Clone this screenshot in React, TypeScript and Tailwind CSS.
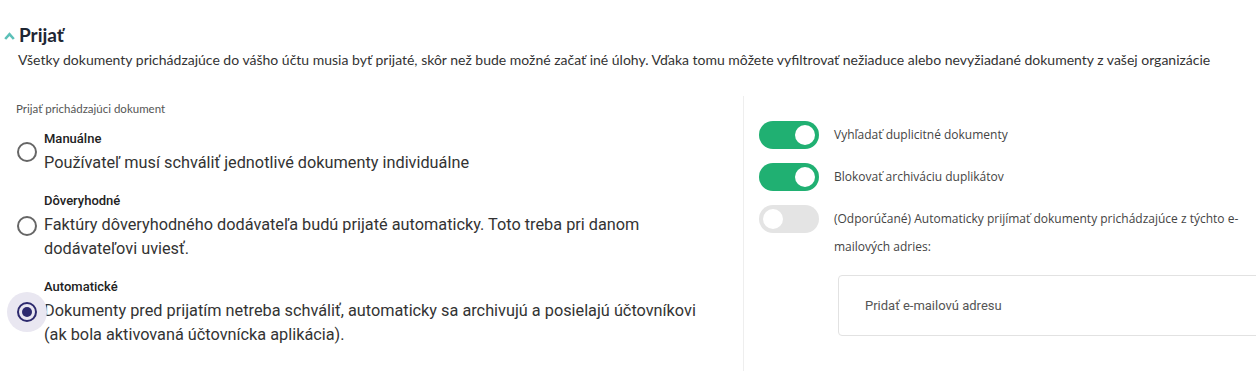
import { useState } from 'react';

const options = [
  {
    id: 'manual',
    title: 'Manuálne',
    text: 'Používateľ musí schváliť jednotlivé dokumenty individuálne',
  },
  {
    id: 'trusted',
    title: 'Dôveryhodné',
    text: 'Faktúry dôveryhodného dodávateľa budú prijaté automaticky. Toto treba pri danom dodávateľovi uviesť.',
  },
  {
    id: 'auto',
    title: 'Automatické',
    text: 'Dokumenty pred prijatím netreba schváliť, automaticky sa archivujú a posielajú účtovníkovi (ak bola aktivovaná účtovnícka aplikácia).',
  },
];

function Toggle({ on, onClick }: { on: boolean; onClick: () => void }) {
  return (
    <button
      type="button"
      onClick={onClick}
      className={`flex h-[28px] w-[60px] shrink-0 items-center rounded-full px-[4px] ${
        on ? 'justify-end bg-[#20b072]' : 'justify-start bg-[#e4e4e4]'
      }`}
    >
      <span className="block h-[20px] w-[20px] rounded-full bg-white" />
    </button>
  );
}

export default function App() {
  const [selected, setSelected] = useState('auto');
  const [dup, setDup] = useState(true);
  const [block, setBlock] = useState(true);
  const [autoMail, setAutoMail] = useState(false);

  return (
    <div className="flex h-[371px] w-[1256px] flex-col overflow-hidden bg-white">
      <div className="flex items-center gap-[4px] pl-[4px] pt-[23px]">
        <svg width="11" height="8" viewBox="0 0 11 8" className="mt-[1px]">
          <path d="M1.2 7 L5.5 2.2 L9.8 7" fill="none" stroke="#5cc0b8" strokeWidth="2.6" />
        </svg>
        <h2 className="font-['Lato',sans-serif] text-[19px] font-bold leading-[24px] text-[#1e2633]">Prijať</h2>
      </div>
      <p className="mt-[4px] pl-[18px] font-['Lato',sans-serif] text-[14px] leading-[18px] text-[#333]">
        Všetky dokumenty prichádzajúce do vášho účtu musia byť prijaté, skôr než bude možné začať iné úlohy. Vďaka tomu môžete vyfiltrovať nežiaduce alebo nevyžiadané dokumenty z vašej organizácie
      </p>

      <div className="mt-[27px] flex flex-1">
        <div className="w-[743px] shrink-0 pl-[16px] pt-[6px]">
          <div className="font-['Lato',sans-serif] text-[11.5px] leading-[14px] text-[#555]">Prijať prichádzajúci dokument</div>
          <div className="mt-[13px] flex flex-col gap-[16px]">
            {options.map((o) => {
              const on = selected === o.id;
              return (
                <label key={o.id} className="flex cursor-pointer items-center" onClick={() => setSelected(o.id)}>
                  <span className="relative ml-[1px] flex h-[20px] w-[20px] shrink-0 items-center justify-center">
                    {on && <span className="absolute left-[-10px] top-[-10px] h-[40px] w-[40px] rounded-full bg-[#e9e7f1]" />}
                    <span
                      className={`relative flex h-[20px] w-[20px] items-center justify-center rounded-full border-2 ${
                        on ? 'border-[#2d2a6e]' : 'border-[#666]'
                      }`}
                    >
                      {on && <span className="block h-[10px] w-[10px] rounded-full bg-[#2d2a6e]" />}
                    </span>
                  </span>
                  <div className="ml-[7px] w-[670px] font-['Roboto',sans-serif]">
                    <div className="text-[13px] font-medium leading-[20px] text-[#222]">{o.title}</div>
                    <div className="mt-[2px] text-[16.3px] leading-[24px] text-[#333]">{o.text}</div>
                  </div>
                </label>
              );
            })}
          </div>
        </div>

        <div className="flex-1 border-l border-[#eeeeee] pl-[15px] pt-[25px] font-['Open_Sans',sans-serif] text-[12px] text-[#444]">
          <div className="flex items-center gap-[15px]">
            <Toggle on={dup} onClick={() => setDup(!dup)} />
            <span>Vyhľadať duplicitné dokumenty</span>
          </div>
          <div className="mt-[14px] flex items-center gap-[15px]">
            <Toggle on={block} onClick={() => setBlock(!block)} />
            <span>Blokovať archiváciu duplikátov</span>
          </div>
          <div className="mt-[14px] flex items-start gap-[15px]">
            <Toggle on={autoMail} onClick={() => setAutoMail(!autoMail)} />
            <div className="flex-1">
              <p className="w-[410px] leading-[28px]">
                (Odporúčané) Automaticky prijímať dokumenty prichádzajúce z týchto e-mailových adries:
              </p>
              <input
                placeholder="Pridať e-mailovú adresu"
                className="mt-[14px] ml-[4px] h-[61px] w-[440px] rounded-[4px] border border-[#e2e2e2] px-[26px] font-['Roboto',sans-serif] text-[13px] text-[#333] placeholder:text-[#555] focus:outline-none"
              />
            </div>
          </div>
        </div>
      </div>
    </div>
  );
}
